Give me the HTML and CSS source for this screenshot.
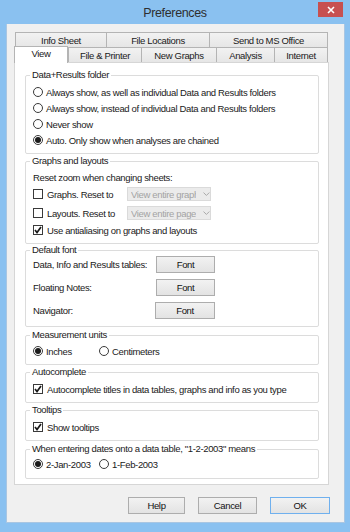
FILE: index.html
```html
<!DOCTYPE html>
<html>
<head>
<meta charset="utf-8">
<link rel="stylesheet" href="styles.css">
</head>
<body>
<div class="frame">
  <div class="titlebar">
    <span></span>
    <span class="title">Preferences</span>
    <span class="close"><svg width="8" height="8" viewBox="0 0 8 8"><path d="M1 1L7 7M7 1L1 7" stroke="#fff" stroke-width="1.6"/></svg></span>
  </div>
  <div class="client">
    <div class="tabrow back">
      <div class="tab w91">Info Sheet</div>
      <div class="tab w103">File Locations</div>
      <div class="tab w119 last">Send to MS Office</div>
    </div>
    <div class="tabrow front">
      <div class="tab sel w54">View</div>
      <div class="tab w73">File &amp; Printer</div>
      <div class="tab w75">New Graphs</div>
      <div class="tab w58">Analysis</div>
      <div class="tab w54 last">Internet</div>
    </div>
    <div class="panel">
      <fieldset class="grp g1">
        <legend>Data+Results folder</legend>
        <div class="row"><span class="radio"></span>Always show, as well as individual Data and Results folders</div>
        <div class="row"><span class="radio"></span>Always show, instead of individual Data and Results folders</div>
        <div class="row"><span class="radio"></span>Never show</div>
        <div class="row"><span class="radio on"></span>Auto. Only show when analyses are chained</div>
      </fieldset>
      <fieldset class="grp g2">
        <legend>Graphs and layouts</legend>
        <div class="row">Reset zoom when changing sheets:</div>
        <div class="row tall">
          <span class="lbl"><span class="check"></span>Graphs. Reset to</span>
          <span class="select"><span class="seltext">View entire graph</span><svg class="chev" width="7" height="4" viewBox="0 0 7 4"><path d="M0.5 0.5L3.5 3.5L6.5 0.5" fill="none" stroke="#a8a8a8" stroke-width="1"/></svg></span>
        </div>
        <div class="row tall second">
          <span class="lbl"><span class="check"></span>Layouts. Reset to</span>
          <span class="select"><span class="seltext">View entire page</span><svg class="chev" width="7" height="4" viewBox="0 0 7 4"><path d="M0.5 0.5L3.5 3.5L6.5 0.5" fill="none" stroke="#a8a8a8" stroke-width="1"/></svg></span>
        </div>
        <div class="row"><span class="check on"><svg width="10" height="10" viewBox="0 0 10 10"><path d="M2 5L4 7.5L8 2" fill="none" stroke="#1a1a1a" stroke-width="1.7"/></svg></span>Use antialiasing on graphs and layouts</div>
      </fieldset>
      <fieldset class="grp g3">
        <legend>Default font</legend>
        <div class="fontrow"><span>Data, Info and Results tables:</span><span class="btn">Font</span></div>
        <div class="fontrow"><span>Floating Notes:</span><span class="btn">Font</span></div>
        <div class="fontrow"><span>Navigator:</span><span class="btn nav">Font</span></div>
      </fieldset>
      <fieldset class="grp g4">
        <legend>Measurement units</legend>
        <div class="pair">
          <div class="row"><span class="radio on"></span>Inches</div>
          <div class="row"><span class="radio"></span>Centimeters</div>
        </div>
      </fieldset>
      <fieldset class="grp g5">
        <legend>Autocomplete</legend>
        <div class="row"><span class="check on"><svg width="10" height="10" viewBox="0 0 10 10"><path d="M2 5L4 7.5L8 2" fill="none" stroke="#1a1a1a" stroke-width="1.7"/></svg></span>Autocomplete titles in data tables, graphs and info as you type</div>
      </fieldset>
      <fieldset class="grp g6">
        <legend>Tooltips</legend>
        <div class="row"><span class="check on"><svg width="10" height="10" viewBox="0 0 10 10"><path d="M2 5L4 7.5L8 2" fill="none" stroke="#1a1a1a" stroke-width="1.7"/></svg></span>Show tooltips</div>
      </fieldset>
      <fieldset class="grp g7">
        <legend>When entering dates onto a data table, "1-2-2003" means</legend>
        <div class="pair">
          <div class="row"><span class="radio on"></span>2-Jan-2003</div>
          <div class="row"><span class="radio"></span>1-Feb-2003</div>
        </div>
      </fieldset>
    </div>
    <div class="buttons">
      <span class="btn help">Help</span>
      <span class="btn cancel">Cancel</span>
      <span class="btn ok">OK</span>
    </div>
  </div>
</div>
</body>
</html>
```
FILE: styles.css
```css
* { box-sizing: border-box; }
html, body { margin: 0; padding: 0; }
body {
  width: 350px;
  height: 532px;
  overflow: hidden;
  font-family: "Liberation Sans", Arial, sans-serif;
  font-size: 9.5px;
  letter-spacing: -0.35px;
  color: #1a1a1a;
}
.frame {
  width: 350px;
  height: 532px;
  background: #8ac1f0;
  padding: 0 6px 9px 7px;
  display: flex;
  flex-direction: column;
}
.titlebar {
  height: 24px;
  display: grid;
  grid-template-columns: 1fr auto 1fr;
  align-items: start;
  margin-right: -6px;
  margin-left: -7px;
}
.title {
  font-size: 12.5px;
  letter-spacing: -0.35px;
  color: #2e2e2e;
  line-height: 24px;
  padding-top: 1px;
}
.close {
  justify-self: end;
  margin-right: 7px;
  margin-top: 2px;
  width: 25px;
  height: 15px;
  background: #c75050;
  display: flex;
  align-items: center;
  justify-content: center;
}
.client {
  flex: 1;
  background: #f0f0f0;
  border: 1px solid #a9c6e2;
  border-top: none;
  padding: 8px 0 8px 0;
  margin-left: -1px;
  margin-right: -1px;
  display: flex;
  flex-direction: column;
}
.tabrow { display: flex; height: 15px; }
.tabrow.back { margin-left: 8px; }
.tabrow.front { margin-left: 7px; }
.tab {
  height: 15px;
  border: 1px solid #b4b4b4;
  border-right: none;
  border-bottom: none;
  background: linear-gradient(#f2f2f2, #e6e6e6);
  text-align: center;
  line-height: 15px;
  white-space: nowrap;
}
.tab.last { border-right: 1px solid #b4b4b4; }
.tab.sel {
  position: relative;
  z-index: 1;
  height: 17px;
  margin-top: -1px;
  background: #fff;
  border-right: 1px solid #b4b4b4;
  line-height: 13px;
}
.w91 { width: 91px; }
.w103 { width: 103px; }
.w119 { width: 119px; }
.w54 { width: 54px; }
.w73 { width: 73px; }
.w75 { width: 75px; }
.w58 { width: 58px; }
.panel {
  margin-left: 7px;
  width: 315px;
  height: 423px;
  background: #fff;
  border: 1px solid #d6d6d6;
  padding: 6px 9px 4px 10px;
}
.grp {
  margin: 1px 0 0 0;
  padding: 3px 4px 5px 7px;
  border: 1px solid #dcdcdc;
  border-radius: 2px;
  min-width: 0;
}
.grp legend {
  padding: 0 2px;
  margin-left: -3px;
  line-height: 12px;
  height: 12px;
}
.g1 { margin-top: 0; }
.g2 { padding-top: 2px; }
.g3 { margin-top: 0; padding-top: 0; padding-bottom: 7px; }
.g4 { margin-top: 2px; padding-top: 2px; }
.g7 { margin-top: 2px; padding-top: 1px; padding-bottom: 6px; }
.row {
  height: 16px;
  display: flex;
  align-items: center;
  white-space: nowrap;
}
.row.tall { height: 18px; display: grid; grid-template-columns: 94px 84px; align-items: center; }
.row.second { margin-top: 1px; }
.lbl { display: flex; align-items: center; }
.radio {
  width: 10px;
  height: 10px;
  border-radius: 50%;
  border: 1px solid #3a3a3a;
  background: #fff;
  margin-right: 3px;
  flex: none;
  display: flex;
  align-items: center;
  justify-content: center;
}
.radio.on::after {
  content: "";
  width: 6px;
  height: 6px;
  border-radius: 50%;
  background: #1c1c1c;
}
.check {
  width: 10px;
  height: 10px;
  border: 1px solid #3a3a3a;
  background: #fff;
  margin-right: 4px;
  flex: none;
}
.check svg { display: block; margin: -1px 0 0 -1px; }
.select {
  width: 84px;
  height: 14px;
  background: #ebebeb;
  border: 1px solid #dadada;
  display: flex;
  align-items: center;
  color: #a3a3a3;
  padding-left: 3px;
}
.seltext { width: 67px; overflow: hidden; white-space: nowrap; }
.chev { margin-left: 7px; }
.fontrow {
  height: 17px;
  display: grid;
  grid-template-columns: 123px 59px;
  align-items: center;
  white-space: nowrap;
}
.fontrow + .fontrow { margin-top: 6px; }
.btn {
  display: flex;
  align-items: center;
  justify-content: center;
  height: 17px;
  border: 1px solid #adadad;
  background: linear-gradient(#f2f2f2, #e3e3e3);
  color: #111;
}
.btn.nav { margin-left: -1px; }
.pair { display: grid; grid-template-columns: 66px auto; }
.buttons {
  margin-top: 12px;
  display: flex;
  justify-content: flex-end;
  gap: 13px;
  padding-right: 14px;
}
.help { width: 57px; }
.cancel { width: 59px; }
.ok { width: 60px; border-color: #6fb0ee; }
```
